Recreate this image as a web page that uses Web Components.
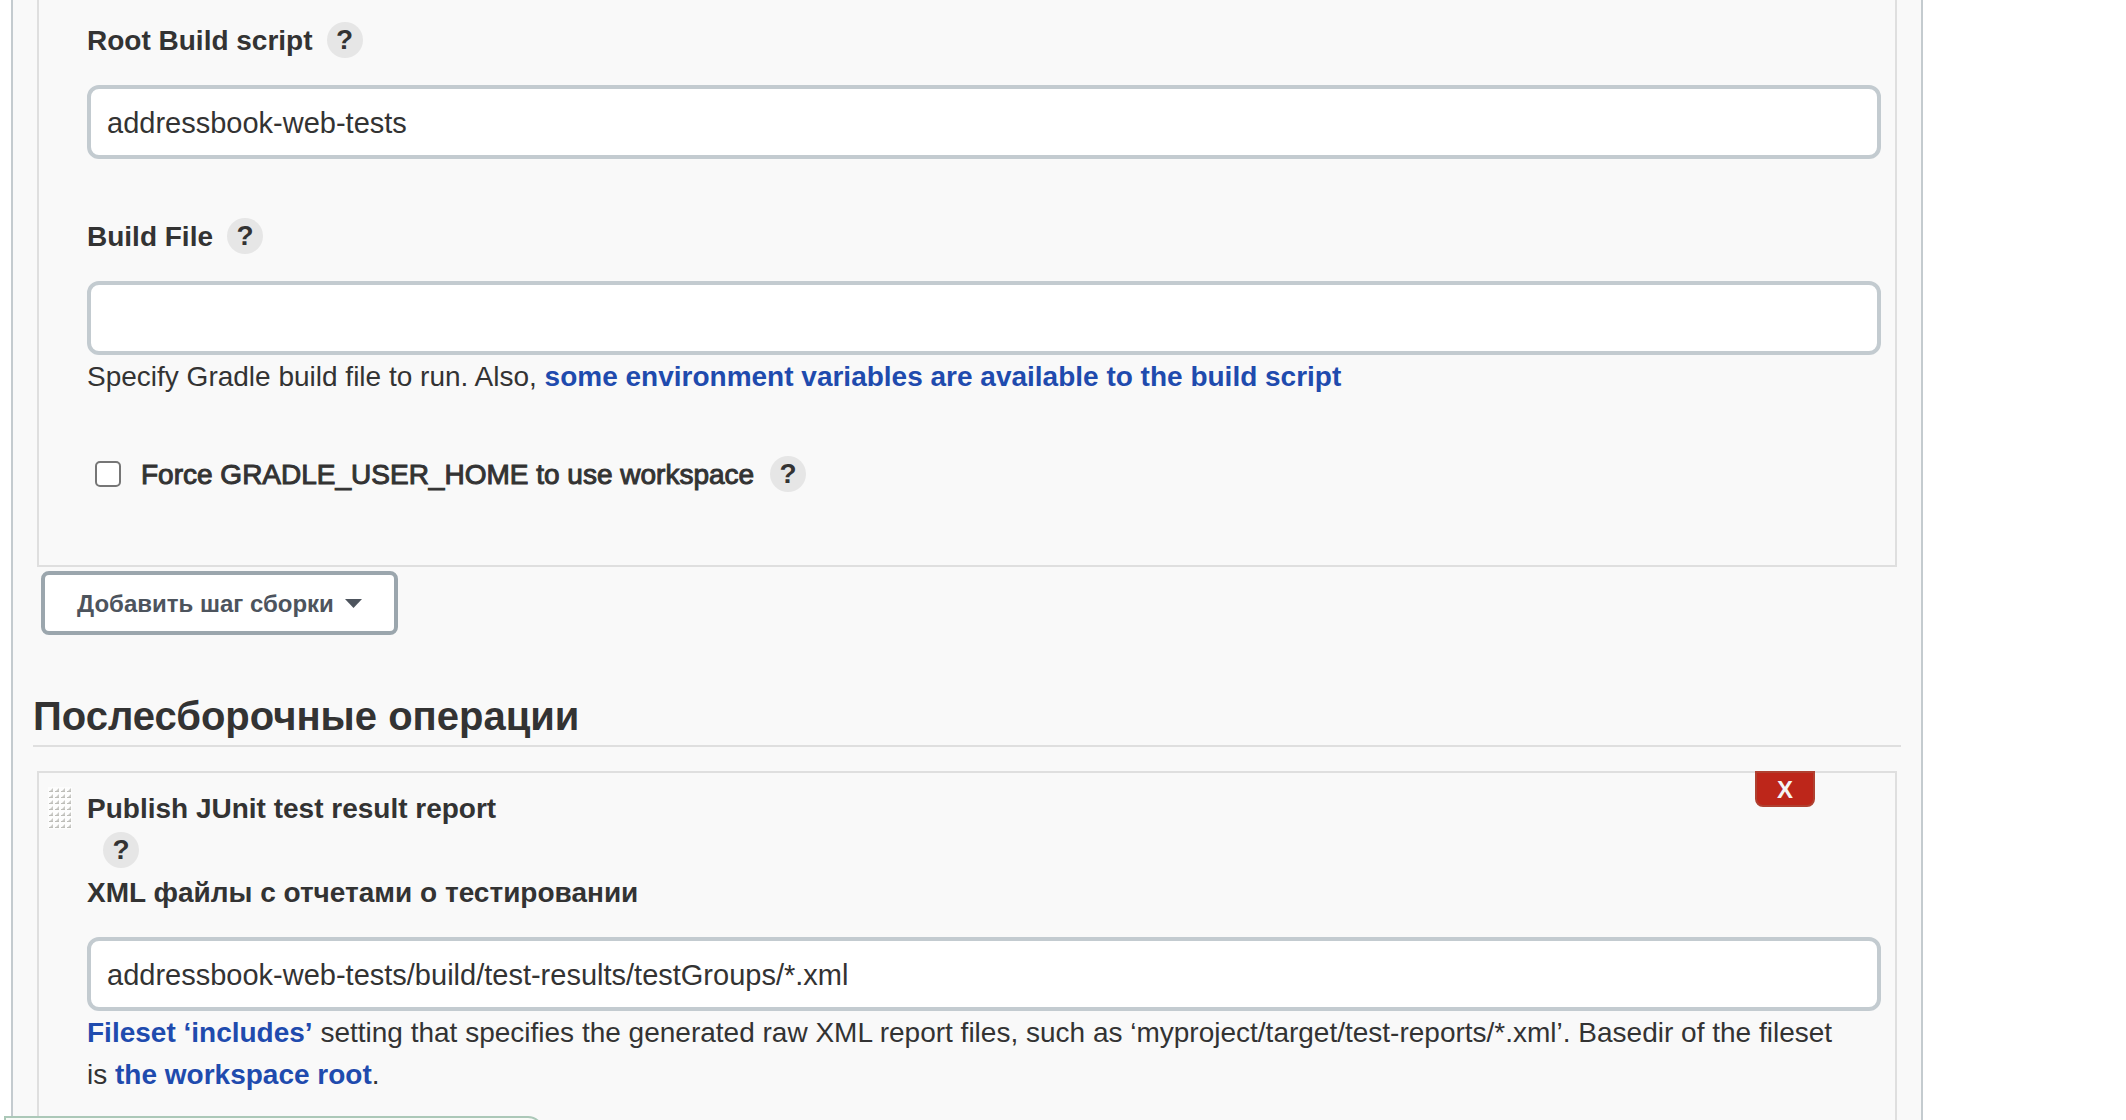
<!DOCTYPE html>
<html lang="ru">
<head>
<meta charset="utf-8">
<title>Config</title>
<style>
html, body { margin: 0; height: 100%; }
body { background: #fff; color: #333; font: 28px/42px "Liberation Sans", Arial, sans-serif; overflow: hidden; }
</style>
</head>
<body>
<config-page>
  <build-step tail>
    <config-field label="Root Build script" value="addressbook-web-tests" help></config-field>
    <config-field label="Build File" help>Specify Gradle build file to run. Also, <a href="#env">some environment variables are available to the build script</a></config-field>
    <check-field label="Force GRADLE_USER_HOME to use workspace"></check-field>
  </build-step>
  <menu-button>Добавить шаг сборки</menu-button>
  <section-title>Послесборочные операции</section-title>
  <build-step head heading="Publish JUnit test result report">
    <config-field label="XML файлы с отчетами о тестировании" value="addressbook-web-tests/build/test-results/testGroups/*.xml"><a href="#fileset">Fileset ‘includes’</a> setting that specifies the generated raw XML report files, such as ‘myproject/target/test-reports/*.xml’. Basedir of the fileset<br>is <a href="#root">the workspace root</a>.</config-field>
  </build-step>
</config-page>
<status-bubble></status-bubble>

<script>
class Base extends HTMLElement {
  connectedCallback() {
    if (this.shadowRoot) return;
    this.attachShadow({ mode: "open" }).innerHTML =
      `<style>*{box-sizing:border-box}${this.css()}</style>${this.html()}`;
  }
  attr(name) { return this.getAttribute(name) || ""; }
}

customElements.define("config-page", class extends Base {
  css() { return `
    :host { display: block; min-height: 100vh; }
    main { display: flex; flex-direction: column; min-height: 100vh; margin: 0 203px 0 11px;
      padding: 0 20px; background: #f9f9f9; border: solid #c4cbcf; border-width: 0 2px; }`; }
  html() { return `<main><slot></slot></main>`; }
});

customElements.define("help-button", class extends Base {
  css() { return `
    :host { display: inline-flex; }
    button { width: 36px; height: 36px; padding: 0; border: 0; border-radius: 50%;
      background: #e6e6e6; color: #333; font: bold 28px/36px "Liberation Sans", Arial, sans-serif; }`; }
  html() { return `<button type="button">?</button>`; }
});

customElements.define("drag-handle", class extends Base {
  css() { return `:host { display: block; width: 24px; height: 42px; } svg { display: block; }`; }
  html() {
    let dots = "";
    for (let y = 0; y < 7; y++) for (let x = 0; x < 4; x++) {
      const px = 1 + x * 6, py = y * 6;
      dots += `<path d="M${px + 4} ${py + 1}v4h-4z" fill="#c9c9c5"/><path d="M${px} ${py + 4}h4v1h-4z" fill="#bdbdb8"/>`;
    }
    return `<svg width="24" height="42" viewBox="0 0 24 42" aria-hidden="true"><path d="M0 0h24v42H0z" fill="#fdfdfd"/>${dots}</svg>`;
  }
});

customElements.define("build-step", class extends Base {
  css() { return `
    :host { display: block; margin: 0 4px; }
    :host([head]) { flex: 1; display: flex; }
    section { position: relative; width: 100%; border: 2px solid #dfdfdf; padding: 14px 14px 14px 48px; }
    :host([tail]) section { border-top: 0; padding-top: 19px; }
    :host([head]) section { border-bottom: 0; }
    drag-handle { position: absolute; left: 9px; top: 14px; }
    .title { height: 42px; padding-top: 1px; font-weight: bold; }
    .help { display: flex; align-items: center; height: 42px; padding-left: 16px; }
    .delete { position: absolute; top: -2px; right: 80px; width: 60px; height: 36px; padding: 2px 0 0;
      border: 2px solid #b04030; border-radius: 0 0 8px 8px; background: #bd261a; color: #f4f4f4;
      font: bold 24px/30px "Liberation Sans", Arial, sans-serif; }`; }
  html() {
    const head = this.hasAttribute("head") ? `<drag-handle></drag-handle>
      <div class="title">${this.attr("heading")}</div>
      <div class="help"><help-button></help-button></div>
      <button class="delete" type="button">X</button>` : "";
    return `<section>${head}<slot></slot></section>`;
  }
});

customElements.define("config-field", class extends Base {
  css() { return `
    :host { display: block; margin-bottom: 56px; }
    .label { display: flex; align-items: center; gap: 14px; height: 42px; font-weight: bold; margin-bottom: 24px; }
    label { padding-top: 2px; }
    input { display: block; width: 100%; height: 74px; padding: 2px 16px 0; border: 4px solid #c3cbd0;
      border-radius: 12px; background: #fff; color: #333; font: 29px "Liberation Sans", Arial, sans-serif; }
    .note { padding-top: 1px; margin-bottom: -1px; }
    ::slotted(a) { color: #1f4bae; font-weight: bold; text-decoration: none; }`; }
  html() {
    const note = this.textContent.trim() ? `<div class="note"><slot></slot></div>` : "";
    return `<div class="label"><label for="f">${this.attr("label")}</label>${this.hasAttribute("help") ? "<help-button></help-button>" : ""}</div>
      <input id="f" type="text" value="${this.attr("value")}">${note}`;
  }
});

customElements.define("check-field", class extends Base {
  css() { return `
    :host { display: flex; align-items: center; height: 42px; margin-bottom: 56px; padding-left: 8px; }
    input { appearance: none; width: 26px; height: 26px; margin: 0 20px 0 0; border: 2px solid #767676;
      border-radius: 5px; background: #fff; }
    label { padding-top: 2px; margin-right: 16px; -webkit-text-stroke: 1px currentColor; }`; }
  html() { return `<input id="c" type="checkbox"><label for="c">${this.attr("label")}</label><help-button></help-button>`; }
});

customElements.define("menu-button", class extends Base {
  css() { return `
    :host { display: block; margin: 4px 8px 0; }
    button { display: flex; align-items: center; gap: 11px; height: 64px; padding: 0 32px;
      border: 4px solid #9ba6ad; border-radius: 8px; background: #fff; color: #4d545d;
      font: bold 24px "Liberation Sans", Arial, sans-serif; }
    span { padding-top: 2px; }`; }
  html() { return `<button type="button"><span><slot></slot></span><svg width="17" height="9" viewBox="0 0 17 9" aria-hidden="true"><path d="M0 0h17L8.5 9z" fill="#4d545d"/></svg></button>`; }
});

customElements.define("section-title", class extends Base {
  css() { return `
    :host { display: block; margin: 56px 0 24px; }
    h2 { margin: 0; padding-bottom: 4px; font-size: 40px; line-height: 50px; border-bottom: 2px solid #dfdfdf; }`; }
  html() { return `<h2><slot></slot></h2>`; }
});

customElements.define("status-bubble", class extends Base {
  css() { return `
    :host { position: fixed; left: 4px; bottom: 0; width: 540px; height: 4px; overflow: hidden; }
    div { height: 44px; border: 2px solid #abc8b8; border-radius: 0 16px 0 0; background: #f9faf7; }`; }
  html() { return `<div></div>`; }
});
</script>
</body>
</html>
